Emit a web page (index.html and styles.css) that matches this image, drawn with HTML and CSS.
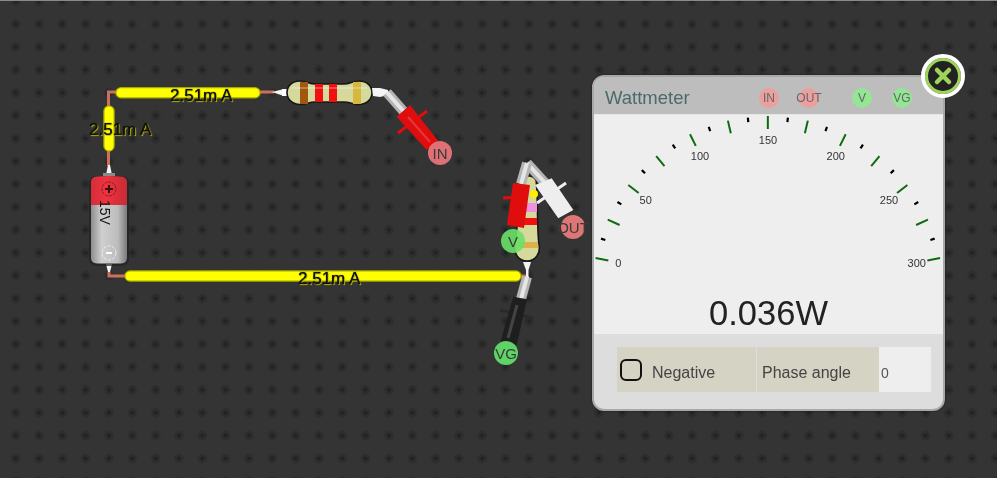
FILE: index.html
```html
<!DOCTYPE html>
<html lang="en">
<head>
    <meta charset="UTF-8">
    <title>Wattmeter | Circuit Simulator</title>
    <link rel="stylesheet" href="styles.css">
</head>
<body>
    <div class="board">
        <!-- wires and parts sit on a free canvas -->
        <svg class="circuit" width="997" height="478" viewBox="0 0 997 478">
            <defs>
                <linearGradient id="batteryBody" x1="0" y1="0" x2="1" y2="0">
                    <stop offset="0" stop-color="#8d8d8d"/>
                    <stop offset="0.3" stop-color="#cfcfcf"/>
                    <stop offset="0.75" stop-color="#bcbcbc"/>
                    <stop offset="1" stop-color="#7a7a7a"/>
                </linearGradient>
                <linearGradient id="batteryCap" x1="0" y1="0" x2="1" y2="0">
                    <stop offset="0" stop-color="#d42d38"/>
                    <stop offset="0.4" stop-color="#ee3340"/>
                    <stop offset="1" stop-color="#c92b35"/>
                </linearGradient>
            </defs>

            <!-- copper -->
            <path class="copper" d="M117 92H108.500V106M108.500 151V166M109 272V276H125M259 92H274"/>
            <path class="copper" d="M520 276H528"/>

            <!-- live segments -->
            <line class="live-edge" x1="121" y1="92.700" x2="255" y2="92.700"/>
            <line class="live" x1="121" y1="92.700" x2="255" y2="92.700"/>
            <line class="live-edge" x1="109" y1="111" x2="109" y2="146"/>
            <line class="live" x1="109" y1="111" x2="109" y2="146"/>
            <line class="live-edge" x1="130" y1="276" x2="516" y2="276"/>
            <line class="live" x1="130" y1="276" x2="516" y2="276"/>

            <!-- battery -->
            <path class="lead" d="M106 175L108 165H110L112 175Z"/>
            <path class="lead" d="M106 264L108 272H110L112 264Z"/>
            <rect x="103" y="173" width="12" height="4" fill="#8a8a8a"/>
            <rect class="part-shadow" x="89" y="176" width="40" height="90" rx="7"/>
            <path fill="url(#batteryBody)" d="M91 204H127V258Q127 263 121 263.500H97Q91 263 91 258Z"/>
            <path fill="url(#batteryCap)" d="M91 182Q91 177 97 176.500Q109 175.500 121 176.500Q127 177 127 182V205H91Z"/>
            <circle cx="109" cy="189" r="7" fill="none" stroke="#8d1c24" stroke-dasharray="3 1"/>
            <path d="M105 189H113M109 185V193" stroke="#3a1014" stroke-width="2"/>
            <circle cx="109" cy="253" r="7" fill="none" stroke="#eee" stroke-dasharray="3 1.500"/>
            <path d="M106 253H112" stroke="#fff" stroke-width="2"/>
            <text class="battery-label" transform="translate(99.500 200) rotate(90)">15V</text>

            <!-- first resistor -->
            <path class="lead" d="M272 92L284 89V96Z"/>
            <rect x="282" y="89" width="6" height="7" fill="#fff"/>
            <path class="resistor" d="M300 81C306 81 309 84 315 84H344C350 84 353 81 359 81C367 81 372 86 372 92.500C372 99 367 104.500 359 104.500C353 104.500 350 102 344 102H315C309 102 306 104.500 300 104.500C292 104.500 287 99 287 92.500C287 86 292 81 300 81Z"/>
            <rect x="300" y="82" width="8" height="22" fill="#a0580c"/>
            <rect x="315" y="84" width="8" height="18" fill="#f01010"/>
            <rect x="329" y="84" width="8" height="18" fill="#f01010"/>
            <rect x="353" y="82" width="8" height="22" fill="#d8b83c"/>
            <line x1="292" y1="88" x2="367" y2="88" stroke="#fff" stroke-width="2" opacity="0.25"/>

            <!-- IN probe -->
            <path class="lead" d="M372 88H380L388 90V95L380 97L373 96Z"/>
            <path class="tube" d="M387 92.500L405 113"/>
            <path class="tube-shine" d="M387 92.500L405 113"/>
            <path class="fin" d="M398 133L427 111" stroke="#e00d0d"/>
            <polygon points="410,105 396.700,116.700 426.700,150 438.300,141" fill="#df0d0d"/>
            <path d="M408 117L430 142" stroke="#f06060" stroke-width="2" opacity="0.5"/>

            <!-- second resistor, stood upright -->
            <path class="lead" d="M523 262H531L528.500 270V276L530 279H524L526 276V270Z"/>
            <path class="resistor" d="M523 178C527 175 533 175 536 180C538 190 537 235 539 244C541 254 535 261 527 261C519 261 513 254 515 244C517 235 519 190 523 178Z"/>
            <rect x="517" y="242" width="21" height="6" fill="#dcb14a"/>
            <rect x="517" y="218" width="20" height="7" fill="#f01010"/>
            <rect x="520" y="203" width="17" height="9" fill="#f090e0"/>
            <circle cx="534" cy="194" r="4" fill="#ffef00"/>

            <!-- OUT probe -->
            <path class="tube" d="M527 163L546 184"/>
            <path class="tube-shine" d="M527 163L546 184"/>
            <path class="fin" d="M537 203L566 183" stroke="#eee"/>
            <polygon points="535,185 551.700,178.300 573.300,210 558.300,218.300" fill="#eee"/>

            <!-- V probe -->
            <path class="tube" d="M527 163L521 184"/>
            <path class="tube-shine" d="M527 163L521 184"/>
            <path class="fin" d="M503 198L522 197" stroke="#e00d0d"/>
            <polygon points="513,183 530,185 524,228 507,225" fill="#e00d0d"/>

            <!-- VG probe -->
            <path class="tube" d="M527 277L521 299"/>
            <path class="tube-shine" d="M527 277L521 299"/>
            <path class="fin" d="M500 310L533 318" stroke="#2a2a2a"/>
            <polygon points="513.300,296.700 527,299.300 516.700,345 500.700,341" fill="#1e1e1e"/>
            <path d="M517 305L508 338" stroke="#444" stroke-width="3"/>
        </svg>

        <span class="amp-label amp-top">2.51m A</span>
        <span class="amp-label amp-left">2.51m A</span>
        <span class="amp-label amp-bottom">2.51m A</span>

        <span class="pin pin-in">IN</span>
        <span class="pin pin-out">OUT</span>
        <span class="pin pin-v">V</span>
        <span class="pin pin-vg">VG</span>

        <div class="wattmeter">
            <div class="meter-header">
                <span class="meter-title">Wattmeter</span>
                <div class="meter-pins">
                    <span class="chip chip-in">IN</span>
                    <span class="chip chip-out">OUT</span>
                    <span class="chip chip-v">V</span>
                    <span class="chip chip-vg">VG</span>
                </div>
            </div>
            <div class="meter-dial">
                <svg class="gauge" width="347" height="176" viewBox="0 0 347 176">
                    <g class="ticks-major">
                        <line x1="173.850" y1="1" x2="173.850" y2="14" transform="rotate(-79 173.850 176.500)"/>
                        <line x1="173.850" y1="1" x2="173.850" y2="14" transform="rotate(-65.830 173.850 176.500)"/>
                        <line x1="173.850" y1="1" x2="173.850" y2="14" transform="rotate(-52.670 173.850 176.500)"/>
                        <line x1="173.850" y1="1" x2="173.850" y2="14" transform="rotate(-39.500 173.850 176.500)"/>
                        <line x1="173.850" y1="1" x2="173.850" y2="14" transform="rotate(-26.330 173.850 176.500)"/>
                        <line x1="173.850" y1="1" x2="173.850" y2="14" transform="rotate(-13.170 173.850 176.500)"/>
                        <line x1="173.850" y1="1" x2="173.850" y2="14"/>
                        <line x1="173.850" y1="1" x2="173.850" y2="14" transform="rotate(13.170 173.850 176.500)"/>
                        <line x1="173.850" y1="1" x2="173.850" y2="14" transform="rotate(26.330 173.850 176.500)"/>
                        <line x1="173.850" y1="1" x2="173.850" y2="14" transform="rotate(39.500 173.850 176.500)"/>
                        <line x1="173.850" y1="1" x2="173.850" y2="14" transform="rotate(52.670 173.850 176.500)"/>
                        <line x1="173.850" y1="1" x2="173.850" y2="14" transform="rotate(65.830 173.850 176.500)"/>
                        <line x1="173.850" y1="1" x2="173.850" y2="14" transform="rotate(79 173.850 176.500)"/>
                    </g>
                    <g class="ticks-minor">
                        <line x1="173.850" y1="1.500" x2="173.850" y2="6" transform="rotate(-72.420 173.850 176.500)"/>
                        <line x1="173.850" y1="1.500" x2="173.850" y2="6" transform="rotate(-59.250 173.850 176.500)"/>
                        <line x1="173.850" y1="1.500" x2="173.850" y2="6" transform="rotate(-46.080 173.850 176.500)"/>
                        <line x1="173.850" y1="1.500" x2="173.850" y2="6" transform="rotate(-32.920 173.850 176.500)"/>
                        <line x1="173.850" y1="1.500" x2="173.850" y2="6" transform="rotate(-19.750 173.850 176.500)"/>
                        <line x1="173.850" y1="1.500" x2="173.850" y2="6" transform="rotate(-6.580 173.850 176.500)"/>
                        <line x1="173.850" y1="1.500" x2="173.850" y2="6" transform="rotate(6.580 173.850 176.500)"/>
                        <line x1="173.850" y1="1.500" x2="173.850" y2="6" transform="rotate(19.750 173.850 176.500)"/>
                        <line x1="173.850" y1="1.500" x2="173.850" y2="6" transform="rotate(32.920 173.850 176.500)"/>
                        <line x1="173.850" y1="1.500" x2="173.850" y2="6" transform="rotate(46.080 173.850 176.500)"/>
                        <line x1="173.850" y1="1.500" x2="173.850" y2="6" transform="rotate(59.250 173.850 176.500)"/>
                        <line x1="173.850" y1="1.500" x2="173.850" y2="6" transform="rotate(72.420 173.850 176.500)"/>
                    </g>
                    <g class="gauge-labels">
                        <text x="24.300" y="151.500">0</text>
                        <text x="51.700" y="89">50</text>
                        <text x="106" y="44.500">100</text>
                        <text x="174" y="28.500">150</text>
                        <text x="241.700" y="44.500">200</text>
                        <text x="295" y="89">250</text>
                        <text x="322.700" y="151.500">300</text>
                    </g>
                </svg>
                <div class="meter-value">0.036W</div>
            </div>
            <div class="meter-footer">
                <div class="meter-controls">
                    <label class="control-cell control-negative">
                        <input type="checkbox" class="check-box">
                        <span>Negative</span>
                    </label>
                    <label class="control-cell control-phase" for="phaseAngle">Phase angle</label>
                    <input type="text" class="phase-input" id="phaseAngle" value="0">
                </div>
            </div>
        </div>

        <button class="close-btn" type="button" aria-label="Close">
            <svg width="24" height="24" viewBox="0 0 24 24">
                <path d="M6 6L18 18M18 6L6 18" stroke="#9fd45a" stroke-width="4.500" stroke-linecap="round"/>
            </svg>
        </button>
    </div>
</body>
</html>
```

FILE: styles.css
```css
* {
    box-sizing: border-box;
}

body {
    margin: 0;
    font-family: "Liberation Sans", Arial, sans-serif;
    background-color: #333;
    overflow: hidden;
}

.board {
    position: relative;
    width: 997px;
    height: 478px;
    overflow: hidden;
    border-top: 1px solid #8a8a8a;
    background-color: #343434;
    background-image:
        radial-gradient(circle, #1f1f1f 0, #222 1.2px, #2c2c2c 2.2px, #2d2d2d 4px, rgba(52,52,52,0) 5.5px);
    background-size: 23.33px 22.87px;
    background-position: 4px -11.2px;
    filter: blur(0.4px);
}

.circuit {
    position: absolute;
    left: 0;
    top: -1px;
}

.copper {
    fill: none;
    stroke: #cf6f5a;
    stroke-width: 3;
}

.live {
    stroke: #ffff00;
    stroke-width: 9;
    stroke-linecap: round;
}

.live-edge {
    stroke: #a8a800;
    stroke-width: 11.5;
    stroke-linecap: round;
}

.lead {
    fill: #f4f4f4;
}

.part-shadow {
    fill: #222;
    opacity: 0.7;
}

.battery-label {
    font-size: 14px;
    fill: #111;
}

.resistor {
    fill: #d5d99b;
    stroke: #161616;
    stroke-width: 1.6;
}

.tube {
    fill: none;
    stroke: #b4b4b4;
    stroke-width: 10;
}

.tube-shine {
    fill: none;
    stroke: #e6e6e6;
    stroke-width: 4;
}

.fin {
    fill: none;
    stroke-width: 3;
}

.amp-label {
    position: absolute;
    font-size: 17px;
    line-height: 20px;
    color: #111;
    white-space: nowrap;
    text-shadow: 0 0 1px #111, 1px 1px 1px #c8c800;
}

.amp-top {
    left: 170px;
    top: 85px;
}

.amp-left {
    left: 89px;
    top: 119px;
}

.amp-bottom {
    left: 298px;
    top: 268px;
}

.pin {
    position: absolute;
    display: flex;
    align-items: center;
    justify-content: center;
    width: 24px;
    height: 24px;
    border-radius: 50%;
    font-size: 15px;
    color: #3a3a3a;
    white-space: nowrap;
}

.pin-in {
    left: 428px;
    top: 140px;
    background-color: rgba(240,120,125,0.9);
}

.pin-out {
    left: 561px;
    top: 214px;
    background-color: rgba(240,125,125,0.9);
}

.pin-v {
    left: 501px;
    top: 228px;
    background-color: rgba(105,225,105,0.9);
}

.pin-vg {
    left: 494px;
    top: 340px;
    background-color: #5fd365;
}

.wattmeter {
    position: absolute;
    left: 592px;
    top: 74px;
    display: flex;
    flex-direction: column;
    width: 353px;
    height: 336px;
    border: 2px solid #a8a8a8;
    border-radius: 12px;
    overflow: hidden;
    background-color: #ddd;
    box-shadow: 0 0 2px rgba(0,0,0,0.6);
}

.meter-header {
    position: relative;
    height: 38px;
    background-color: #bdbdbd;
    border-bottom: 1px solid #e6e6e6;
}

.meter-title {
    position: absolute;
    left: 11px;
    top: 10px;
    font-size: 18.5px;
    line-height: 22px;
    color: #4b6a6a;
}

.chip {
    position: absolute;
    top: 11px;
    display: flex;
    align-items: center;
    justify-content: center;
    width: 20px;
    height: 20px;
    border-radius: 50%;
    font-size: 12px;
    color: #666;
    white-space: nowrap;
}

.chip-in {
    left: 165px;
    background-color: #eba0a0;
}

.chip-out {
    left: 205px;
    background-color: #eba0a0;
}

.chip-v {
    left: 258px;
    background-color: #94e594;
}

.chip-vg {
    left: 298px;
    background-color: #94e594;
}

.meter-dial {
    height: 219px;
    background-color: #eee;
}

.gauge {
    display: block;
}

.ticks-major line {
    stroke: #0f6a0f;
    stroke-width: 2;
}

.ticks-minor line {
    stroke: #000;
    stroke-width: 2.2;
}

.gauge-labels text {
    font-size: 11px;
    fill: #333;
    text-anchor: middle;
}

.meter-value {
    margin-top: 2px;
    font-size: 34.5px;
    line-height: 40px;
    text-align: center;
    color: #222;
}

.meter-footer {
    flex: 1;
    padding: 13px 12px 0 23px;
}

.meter-controls {
    display: flex;
    height: 45px;
}

.control-cell {
    display: flex;
    align-items: center;
    background-color: #d5d3c3;
    font-size: 16px;
    color: #444;
}

.control-negative {
    width: 139px;
    margin-right: 1px;
    padding: 0 0 0 3px;
}

.control-negative span {
    margin-left: 10px;
    padding-top: 7px;
}

.control-phase {
    width: 122px;
    padding: 7px 0 0 5px;
}

.check-box {
    appearance: none;
    width: 22px;
    height: 22px;
    margin: 0;
    border: 2px solid #111;
    border-radius: 6px;
}

.phase-input {
    width: 52px;
    padding: 7px 0 0 2px;
    border: none;
    background-color: #eee;
    font-family: inherit;
    font-size: 14px;
    color: #555;
}

.close-btn {
    position: absolute;
    left: 921px;
    top: 53px;
    display: flex;
    align-items: center;
    justify-content: center;
    width: 44px;
    height: 44px;
    padding: 0;
    border: 4px solid #fff;
    border-radius: 50%;
    background-color: #222;
    box-shadow: inset 0 0 0 3px #9fd45a;
}
```
